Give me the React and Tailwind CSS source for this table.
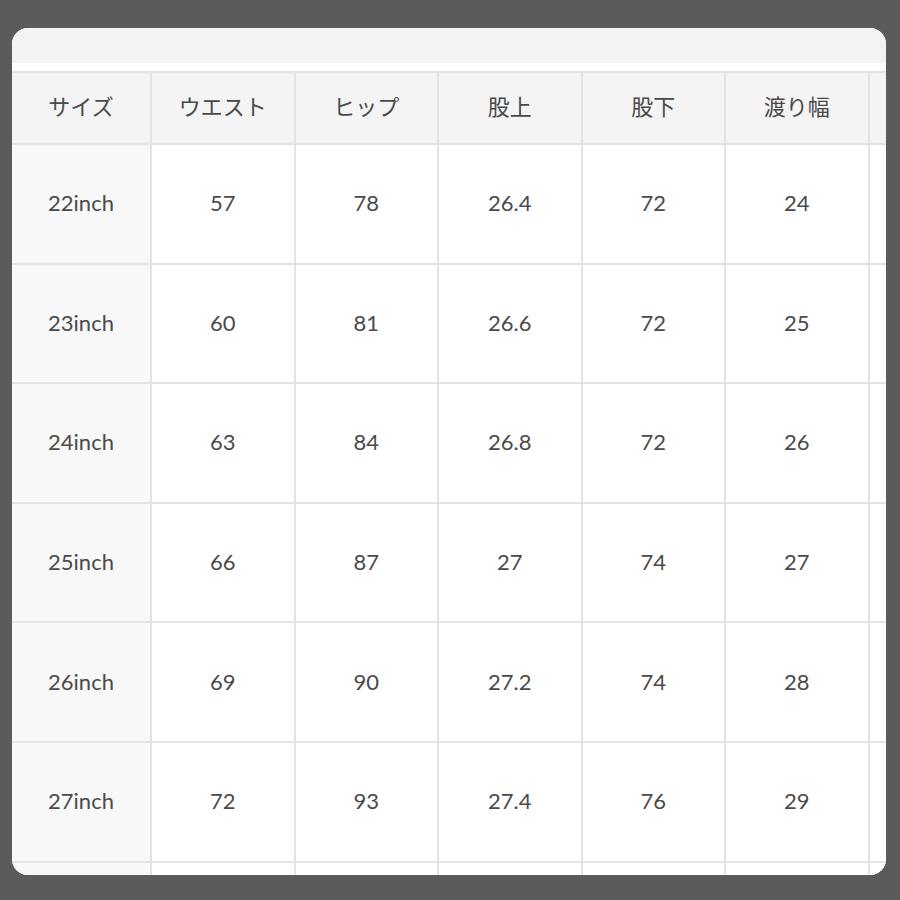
import React from "react";

const headers = ["サイズ", "ウエスト", "ヒップ", "股上", "股下", "渡り幅"];

const rows = [
  ["22inch", "57", "78", "26.4", "72", "24"],
  ["23inch", "60", "81", "26.6", "72", "25"],
  ["24inch", "63", "84", "26.8", "72", "26"],
  ["25inch", "66", "87", "27", "74", "27"],
  ["26inch", "69", "90", "27.2", "74", "28"],
  ["27inch", "72", "93", "27.4", "76", "29"],
  ["", "", "", "", "", ""],
];

export default function App() {
  return (
    <div className="w-[900px] h-[900px] bg-[#5b5b5b] pt-[28px] pl-[12px]">
      <div className="w-[874px] h-[847px] bg-white rounded-[16px] overflow-hidden flex flex-col">
        <div className="h-[35px] bg-[#f3f3f3] shrink-0" />
        <div className="h-[8px] shrink-0" />
        <div
          className="grid grid-cols-[138px_repeat(5,141.5px)_1fr] grid-rows-[70px] auto-rows-[117.6px] gap-[2px] bg-[#e3e3e3] pt-[2px] text-[#4a4a4a]"
          style={{ fontFamily: "Lato, 'Noto Sans CJK JP', sans-serif" }}
        >
          {headers.map((h) => (
            <div
              key={h}
              className="bg-[#f4f4f4] flex items-center justify-center pb-[5px] text-[22px]"
              style={{ fontFamily: "'Noto Sans CJK JP', sans-serif" }}
            >
              {h}
            </div>
          ))}
          <div className="bg-[#f4f4f4]" />
          {rows.map((r, i) => (
            <React.Fragment key={i}>
              {r.map((c, j) => (
                <div
                  key={j}
                  className={
                    j === 0
                      ? "bg-[#f8f8f8] flex items-center justify-center pb-[2px] text-[22px]"
                      : "bg-white flex items-center justify-center pb-[2px] text-[22px]"
                  }
                >
                  {c}
                </div>
              ))}
              <div className="bg-white" />
            </React.Fragment>
          ))}
        </div>
      </div>
    </div>
  );
}
